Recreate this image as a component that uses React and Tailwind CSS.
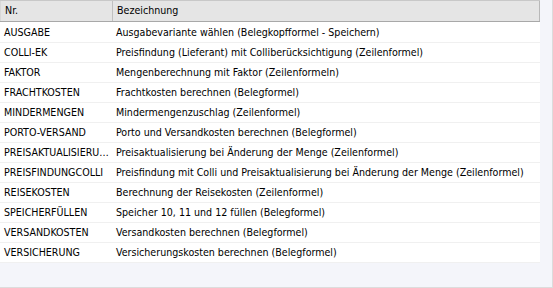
const rows = [
  ["AUSGABE", "Ausgabevariante wählen (Belegkopfformel - Speichern)"],
  ["COLLI-EK", "Preisfindung (Lieferant) mit Colliberücksichtigung (Zeilenformel)"],
  ["FAKTOR", "Mengenberechnung mit Faktor (Zeilenformeln)"],
  ["FRACHTKOSTEN", "Frachtkosten berechnen (Belegformel)"],
  ["MINDERMENGEN", "Mindermengenzuschlag (Zeilenformel)"],
  ["PORTO-VERSAND", "Porto und Versandkosten berechnen (Belegformel)"],
  ["PREISAKTUALISIERUNG", "Preisaktualisierung bei Änderung der Menge (Zeilenformel)"],
  ["PREISFINDUNGCOLLI", "Preisfindung mit Colli und Preisaktualisierung bei Änderung der Menge (Zeilenformel)"],
  ["REISEKOSTEN", "Berechnung der Reisekosten (Zeilenformel)"],
  ["SPEICHERFÜLLEN", "Speicher 10, 11 und 12 füllen (Belegformel)"],
  ["VERSANDKOSTEN", "Versandkosten berechnen (Belegformel)"],
  ["VERSICHERUNG", "Versicherungskosten berechnen (Belegformel)"],
];

export default function App() {
  return (
    <div
      className="w-[553px] h-[288px] bg-[#f4f5fa] border-r border-b border-[#dcdcdc] text-[10.6px] [font-stretch:condensed] text-black overflow-hidden flex"
      style={{ fontFamily: '"DejaVu Sans Condensed", "DejaVu Sans", sans-serif' }}
    >
      <div className="w-[540px] flex flex-col">
        <div className="flex h-[22px] bg-[#e5e5e5] border-t border-b border-[#c8c8c8] border-b-[#a8a8a8]">
          <div className="w-[113px] pl-[4px] flex items-center border-r border-[#c0c0c0] border-l border-l-[#d8d8d8]">Nr.</div>
          <div className="flex-1 pl-[4px] flex items-center border-r border-[#b8b8b8]">Bezeichnung</div>
        </div>
        <div className="h-[1px] bg-white" />
        <div className="bg-white flex flex-col">
          {rows.map(([nr, bez]) => (
            <div key={nr} className="flex h-[20px] border-b border-[#f0f0f0] items-center">
              <div className="w-[113px] pl-[4px] pr-[2px] truncate">{nr}</div>
              <div className="flex-1 pl-[3px] truncate">{bez}</div>
            </div>
          ))}
        </div>
      </div>
    </div>
  );
}
